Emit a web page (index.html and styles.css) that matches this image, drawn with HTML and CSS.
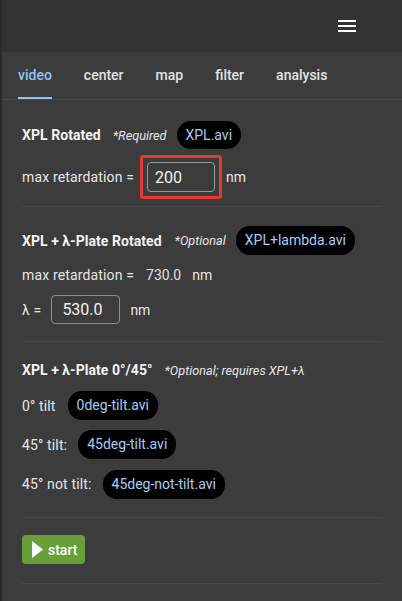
FILE: index.html
```html
<!DOCTYPE html>
<html>
<head>
<meta charset="utf-8">
<link rel="stylesheet" href="styles.css">
</head>
<body>
<div class="app">
  <header class="topbar">
    <div class="menu" aria-label="menu"><span></span><span></span><span></span></div>
  </header>
  <nav class="tabs">
    <div class="tab active">video</div>
    <div class="tab">center</div>
    <div class="tab">map</div>
    <div class="tab">filter</div>
    <div class="tab">analysis</div>
  </nav>
  <main class="content">
    <section class="sec sec1">
      <div class="row h28">
        <span class="title">XPL Rotated</span>
        <span class="note">*Required</span>
        <span class="chip">XPL.avi</span>
      </div>
      <div class="row rowA">
        <span class="label">max retardation =</span>
        <span class="focus"><span class="input w68">200</span></span>
        <span class="unit">nm</span>
      </div>
    </section>
    <section class="sec sec2">
      <div class="row h29">
        <span class="title">XPL + λ-Plate Rotated</span>
        <span class="note">*Optional</span>
        <span class="chip">XPL+lambda.avi</span>
      </div>
      <div class="row h28 mt6">
        <span class="label">max retardation =</span>
        <span class="value">730.0</span>
        <span class="unit2">nm</span>
      </div>
      <div class="row h29 mt6">
        <span class="label">λ =</span>
        <span class="input in2">530.0</span>
        <span class="unit3">nm</span>
      </div>
    </section>
    <section class="sec sec3">
      <div class="row h28">
        <span class="title">XPL + λ-Plate 0°/45°</span>
        <span class="note">*Optional; requires XPL+λ</span>
      </div>
      <div class="row h29 mt7">
        <span class="label">0° tilt</span>
        <span class="chip c2">0deg-tilt.avi</span>
      </div>
      <div class="row h29 mt10">
        <span class="label">45° tilt:</span>
        <span class="chip c3">45deg-tilt.avi</span>
      </div>
      <div class="row h30 mt10">
        <span class="label">45° not tilt:</span>
        <span class="chip c3">45deg-not-tilt.avi</span>
      </div>
    </section>
    <section class="sec sec4">
      <button class="start">
        <svg width="11" height="17" viewBox="0 0 11 17"><path d="M0 0 L11 8.5 L0 17 Z" fill="#fff"/></svg>
        <span>start</span>
      </button>
    </section>
    <div class="sep"></div>
  </main>
</div>
</body>
</html>
```
FILE: styles.css
```css
* { box-sizing: border-box; }
html, body { margin: 0; padding: 0; }
body {
  background: #3c3c3c;
  font-family: Roboto, "Liberation Sans", sans-serif;
  color: #e6e6e6;
  font-size: 14px;
}
.app {
  border-left: 2px solid #2a2a2a;
  min-height: 601px;
  background: #3c3c3c;
}
.topbar {
  height: 52px;
  background: #333333;
  display: flex;
  justify-content: flex-end;
  padding-right: 46px;
  padding-top: 20px;
}
.menu {
  width: 18px;
  display: flex;
  flex-direction: column;
  gap: 3px;
}
.menu span {
  display: block;
  height: 2px;
  background: #ffffff;
}
.tabs {
  display: flex;
  height: 48px;
  border-bottom: 1px solid #4a4a4a;
  background: #3c3c3c;
}
.tab {
  margin: 0 16px;
  height: 47px;
  display: flex;
  align-items: center;
  padding-top: 1px;
  font-size: 14px;
  font-weight: 500;
  color: #e3e3e3;
  border-bottom: 2px solid transparent;
}
.tab.active {
  color: #93c4f2;
  border-bottom-color: #93c4f2;
}
.content {
  padding: 0 20px;
}
.sec + .sec { border-top: 1px solid #47474e; }
.sep { border-top: 1px solid #47474e; }
.sec1 { padding: 21px 0 7px; }
.sec2 { padding: 19px 0 17px; }
.sec3 { padding: 14px 0 18px; }
.sec4 { padding: 17px 0 19px; }
.row {
  display: flex;
  align-items: center;
}
.h28 { height: 28px; }
.h29 { height: 29px; }
.h30 { height: 30px; }
.mt6 { margin-top: 6px; }
.mt7 { margin-top: 7px; }
.mt10 { margin-top: 10px; }
.rowA { height: 44px; margin-top: 6px; }
.title {
  font-weight: 700;
  font-size: 14px;
  color: #f2f2f2;
  letter-spacing: 0.05px;
}
.note {
  font-style: italic;
  font-size: 12.7px;
  color: #e6e6e6;
  margin-left: 12px;
}
.sec2 .note { margin-left: 13px; }
.chip {
  background: #000;
  color: #a7ccf3;
  font-size: 14px;
  height: 28px;
  line-height: 28px;
  padding: 0 9px;
  border-radius: 14px;
  margin-left: 10px;
}
.sec2 .chip { height: 29px; line-height: 29px; }
.c2 { margin-left: 12px; height: 29px; line-height: 29px; }
.c3 { margin-left: 11px; height: 29px; line-height: 29px; }
.label { color: #e6e6e6; letter-spacing: 0.15px; }
.focus {
  margin-left: 6px;
  border: 3px solid #e53935;
  border-radius: 3px;
  padding: 4px 4px;
  display: flex;
}
.input {
  display: flex;
  align-items: center;
  border: 1px solid #9a9a9a;
  border-radius: 4px;
  font-size: 16px;
  color: #f2f2f2;
  padding-left: 7px;
}
.w68 { width: 68px; height: 30px; }
.in2 { width: 69px; height: 29px; margin-left: 10px; padding-left: 10px; border-color: #8c8c8c; }
.unit { margin-left: 4px; }
.value { margin-left: 12px; color: #e0e0e0; }
.unit2 { margin-left: 11px; }
.unit3 { margin-left: 10px; }
.start {
  display: flex;
  align-items: center;
  gap: 5px;
  width: 63px;
  height: 29px;
  padding: 0 0 0 10px;
  border: none;
  border-radius: 4px;
  background: #689f38;
  color: #fff;
  font-family: Roboto, "Liberation Sans", sans-serif;
  font-size: 14px;
  font-weight: 500;
}
```
